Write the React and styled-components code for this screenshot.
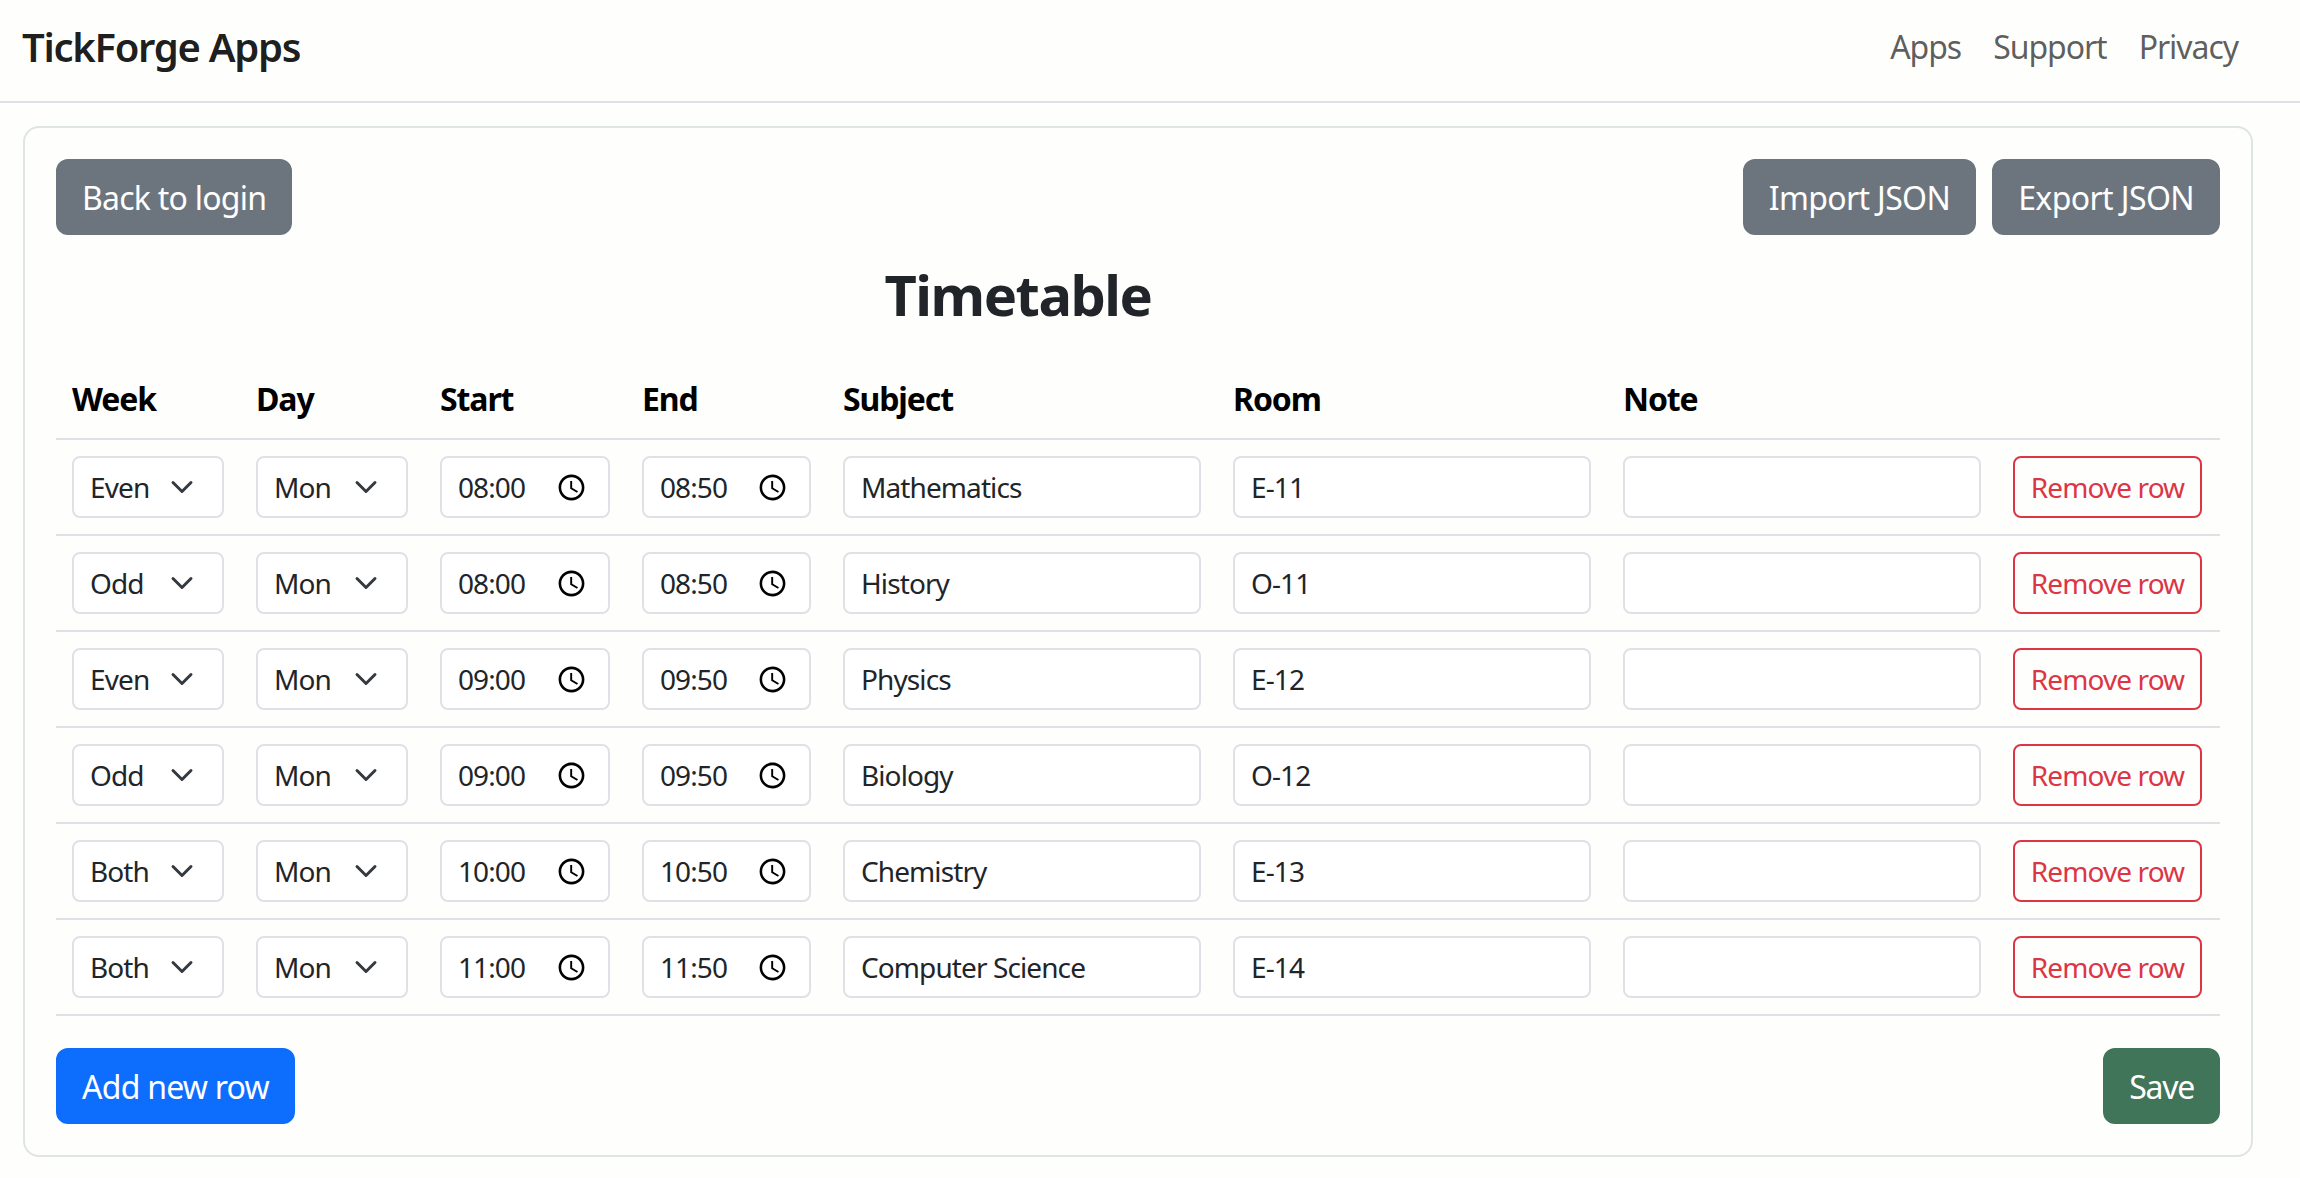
import React from "react";
import styled, { createGlobalStyle } from "styled-components";

const FONT = `"Noto Sans", "Open Sans", "Liberation Sans", sans-serif`;

const GlobalStyle = createGlobalStyle`
  html, body { margin: 0; padding: 0; background: #fefefd; }
  body { font-family: ${FONT}; font-size: 32px; line-height: 48px; color: #212529; }
  * { box-sizing: border-box; }
`;

const NavBar = styled.nav`
  display: flex;
  align-items: center;
  justify-content: space-between;
  height: 103px;
  padding: 0 62px 8px 22px;
  border-bottom: 2px solid #dee2e6;
`;
const Brand = styled.a`
  font-size: 40px;
  font-weight: 600;
  color: rgba(0, 0, 0, 0.9);
  letter-spacing: -1.3px;
`;
const NavLinks = styled.div`
  display: flex;
  gap: 32px;
`;
const NavLink = styled.a`
  font-size: 32px;
  color: rgba(0, 0, 0, 0.65);
  letter-spacing: -1.05px;
`;
const Card = styled.main`
  margin: 23px 47px 21px 23px;
  padding: 31px;
  border: 2px solid #dfe5e1;
  border-radius: 16px;
`;
const ActionRow = styled.div`
  display: flex;
  justify-content: space-between;
  align-items: center;
`;
const ButtonGroup = styled.div`
  display: flex;
  gap: 16px;
`;
const Button = styled.button`
  height: 76px;
  padding: 0 24px;
  border: 2px solid ${(p) => p.$bg};
  border-radius: 12px;
  background: ${(p) => p.$bg};
  color: #fff;
  font-family: ${FONT};
  font-size: 32px;
  letter-spacing: ${(p) => p.$tracking || "-0.75px"};
  white-space: nowrap;
`;
const Title = styled.h1`
  margin: 26px 0 30px;
  padding-right: 240px;
  font-size: 56px;
  line-height: 67px;
  font-weight: 700;
  text-align: center;
  color: #212529;
  letter-spacing: -1.5px;
`;
const Table = styled.table`
  width: 100%;
  table-layout: fixed;
  border-collapse: collapse;
`;
const HeadCell = styled.th`
  padding: 17px 16px 15px;
  border-bottom: 2px solid #dee2e6;
  font-size: 32px;
  line-height: 48px;
  font-weight: 700;
  text-align: left;
  color: #000;
  letter-spacing: -1.1px;
`;
const Row = styled.tr`
  border-bottom: 2px solid #dee2e6;
`;
const Cell = styled.td`
  padding: 16px;
  vertical-align: middle;
`;
const controlStyles = `
  display: block;
  width: 100%;
  height: 62px;
  border: 2px solid #dee2e6;
  border-radius: 8px;
  background-color: #fff;
  color: #212529;
  font-family: ${FONT};
  font-size: 28px;
  letter-spacing: -0.9px;
  outline: none;
`;
const SelectBox = styled.select`
  ${controlStyles}
  padding: 0 0 0 16px;
  appearance: none;
  background-image: url("data:image/svg+xml,%3csvg xmlns='http://www.w3.org/2000/svg' viewBox='0 0 16 16'%3e%3cpath fill='none' stroke='%23343a40' stroke-linecap='round' stroke-linejoin='round' stroke-width='2' d='m2 5 6 6 6-6'/%3e%3c/svg%3e");
  background-repeat: no-repeat;
  background-position: right 24px center;
  background-size: 32px 24px;
`;
const TextBox = styled.input`
  ${controlStyles}
  padding: 0 16px;
`;
const TimeField = styled.div`
  ${controlStyles}
  display: flex;
  align-items: center;
  padding: 0 21px 0 16px;
`;
const TimeText = styled.input`
  flex: 1;
  min-width: 0;
  padding: 0;
  border: 0;
  outline: none;
  background: transparent;
  color: #212529;
  font: inherit;
  letter-spacing: inherit;
`;
const ClockIcon = styled.svg`
  flex: none;
  width: 31px;
  height: 31px;
  fill: #000;
`;
const RemoveButton = styled.button`
  width: 189px;
  height: 62px;
  padding: 0;
  border: 2px solid #dc3545;
  border-radius: 8px;
  background: transparent;
  color: #dc3545;
  font-family: ${FONT};
  font-size: 28px;
  letter-spacing: -0.9px;
  white-space: nowrap;
`;
const FooterRow = styled(ActionRow)`
  margin-top: 32px;
`;

const Clock = () => (
  <ClockIcon viewBox="0 0 24 24" aria-hidden="true">
    <path d="M11.99 2C6.47 2 2 6.48 2 12s4.47 10 9.99 10C17.52 22 22 17.52 22 12S17.52 2 11.99 2zM12 20c-4.42 0-8-3.58-8-8s3.58-8 8-8 8 3.58 8 8-3.58 8-8 8zm.5-13H11v6l5.25 3.15.75-1.23-4.5-2.67z" />
  </ClockIcon>
);

const columns = [
  ["Week", 184],
  ["Day", 184],
  ["Start", 202],
  ["End", 201],
  ["Subject", 390],
  ["Room", 390],
  ["Note", 390],
  ["", 223],
];

const rows = [
  ["Even", "Mon", "08:00", "08:50", "Mathematics", "E-11"],
  ["Odd", "Mon", "08:00", "08:50", "History", "O-11"],
  ["Even", "Mon", "09:00", "09:50", "Physics", "E-12"],
  ["Odd", "Mon", "09:00", "09:50", "Biology", "O-12"],
  ["Both", "Mon", "10:00", "10:50", "Chemistry", "E-13"],
  ["Both", "Mon", "11:00", "11:50", "Computer Science", "E-14"],
];

const noop = () => {};

export default function App() {
  return (
    <>
      <GlobalStyle />
      <NavBar>
        <Brand>TickForge Apps</Brand>
        <NavLinks>
          <NavLink>Apps</NavLink>
          <NavLink>Support</NavLink>
          <NavLink>Privacy</NavLink>
        </NavLinks>
      </NavBar>
      <Card>
        <ActionRow>
          <Button $bg="#6c757d">Back to login</Button>
          <ButtonGroup>
            <Button $bg="#6c757d" $tracking="-0.65px">Import JSON</Button>
            <Button $bg="#6c757d" $tracking="-0.6px">Export JSON</Button>
          </ButtonGroup>
        </ActionRow>
        <Title>Timetable</Title>
        <Table>
          <colgroup>
            {columns.map(([name, w], i) => (
              <col key={i} width={w} />
            ))}
          </colgroup>
          <thead>
            <tr>
              {columns.map(([name], i) => (
                <HeadCell key={i}>{name}</HeadCell>
              ))}
            </tr>
          </thead>
          <tbody>
            {rows.map(([week, day, start, end, subject, room], i) => (
              <Row key={i}>
                <Cell>
                  <SelectBox value={week} onChange={noop}>
                    <option>Even</option>
                    <option>Odd</option>
                    <option>Both</option>
                  </SelectBox>
                </Cell>
                <Cell>
                  <SelectBox value={day} onChange={noop}>
                    <option>Mon</option>
                  </SelectBox>
                </Cell>
                <Cell>
                  <TimeField>
                    <TimeText value={start} onChange={noop} />
                    <Clock />
                  </TimeField>
                </Cell>
                <Cell>
                  <TimeField>
                    <TimeText value={end} onChange={noop} />
                    <Clock />
                  </TimeField>
                </Cell>
                <Cell>
                  <TextBox value={subject} onChange={noop} />
                </Cell>
                <Cell>
                  <TextBox value={room} onChange={noop} />
                </Cell>
                <Cell>
                  <TextBox value="" onChange={noop} />
                </Cell>
                <Cell>
                  <RemoveButton>Remove row</RemoveButton>
                </Cell>
              </Row>
            ))}
          </tbody>
        </Table>
        <FooterRow>
          <Button $bg="#0d6efd">Add new row</Button>
          <Button $bg="#41755a" $tracking="-1.25px">Save</Button>
        </FooterRow>
      </Card>
    </>
  );
}
